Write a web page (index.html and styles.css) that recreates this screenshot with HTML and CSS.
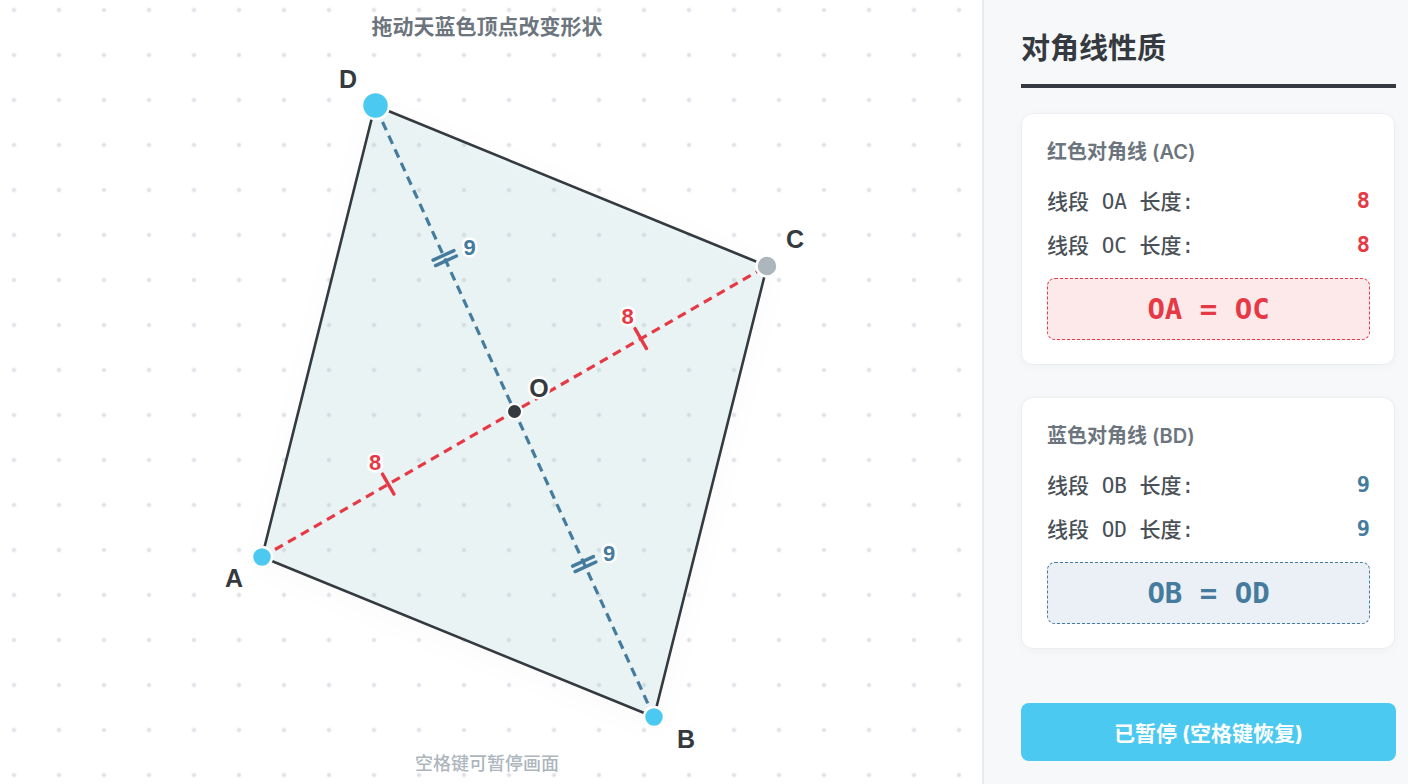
FILE: index.html
```html
<!DOCTYPE html>
<html lang="zh">
<head>
<meta charset="utf-8">
<title>对角线性质</title>
<link rel="stylesheet" href="styles.css">
</head>
<body>
<div class="app">
  <main class="stage">
    <div class="caption caption-top">拖动天蓝色顶点改变形状</div>
    <svg class="board" width="982" height="784" viewBox="0 0 982 784" xmlns="http://www.w3.org/2000/svg">
      <polygon class="quad" points="262,557 654,717 767,266 375,105.5"/>
      <line class="diag diag-ac" x1="262" y1="557" x2="767" y2="266"/>
      <line class="diag diag-bd" x1="654" y1="717" x2="375" y2="105.5"/>
      <line class="tick tick-red" x1="382.51" y1="474.14" x2="393.99" y2="494.07"/>
      <line class="tick tick-red" x1="635.01" y1="328.64" x2="646.49" y2="348.57"/>
      <line class="tick tick-blue" x1="433.05" y1="260.14" x2="453.97" y2="250.60"/>
      <line class="tick tick-blue" x1="435.53" y1="265.60" x2="456.45" y2="256.06"/>
      <line class="tick tick-blue" x1="572.55" y1="566.14" x2="593.47" y2="556.60"/>
      <line class="tick tick-blue" x1="575.03" y1="571.60" x2="595.95" y2="562.06"/>
      <text class="len len-red" x="375" y="462">8</text>
      <text class="len len-red" x="627.5" y="316">8</text>
      <text class="len len-blue" x="469.5" y="247">9</text>
      <text class="len len-blue" x="609" y="553">9</text>
      <circle class="vtx vtx-drag" cx="262" cy="557" r="10"/>
      <circle class="vtx vtx-drag" cx="654" cy="717" r="10"/>
      <circle class="vtx vtx-fixed" cx="767" cy="266" r="10.5"/>
      <circle class="vtx vtx-drag" cx="375.5" cy="105.5" r="13.5"/>
      <circle class="vtx vtx-center" cx="514.5" cy="411.5" r="7.5"/>
      <text class="vlabel" x="348" y="79">D</text>
      <text class="vlabel" x="795" y="239">C</text>
      <text class="vlabel" x="234" y="578">A</text>
      <text class="vlabel" x="686" y="739">B</text>
      <text class="vlabel" x="539" y="388">O</text>
    </svg>
    <div class="caption caption-bottom">空格键可暂停画面</div>
  </main>
  <aside class="panel">
    <h2 class="panel-title">对角线性质</h2>
    <section class="card card-red">
      <div class="card-title">红色对角线 (AC)</div>
      <div class="row"><span class="row-label">线段 OA 长度:</span><span class="row-value">8</span></div>
      <div class="row"><span class="row-label">线段 OC 长度:</span><span class="row-value">8</span></div>
      <div class="equation">OA = OC</div>
    </section>
    <section class="card card-blue">
      <div class="card-title">蓝色对角线 (BD)</div>
      <div class="row"><span class="row-label">线段 OB 长度:</span><span class="row-value">9</span></div>
      <div class="row"><span class="row-label">线段 OD 长度:</span><span class="row-value">9</span></div>
      <div class="equation">OB = OD</div>
    </section>
    <button class="pause-btn" type="button">已暂停 (空格键恢复)</button>
  </aside>
</div>
</body>
</html>
```

FILE: styles.css
```css
* { box-sizing: border-box; }
html, body {
  margin: 0;
  padding: 0;
  width: 1408px;
  height: 784px;
  overflow: hidden;
  background: #ffffff;
  font-family: "Noto Sans CJK SC", "Noto Sans", sans-serif;
}
.app {
  display: flex;
  width: 1408px;
  height: 784px;
}
.stage {
  position: relative;
  flex: 1;
  height: 784px;
  background-color: #ffffff;
  background-image: radial-gradient(circle at center, #dfe2e8 0, #dfe2e8 1.9px, rgba(223,226,232,0) 2.4px);
  background-size: 45px 45px;
  background-position: -8.5px -12.5px;
  overflow: hidden;
}
.board {
  display: block;
}
.caption {
  position: absolute;
  left: 0;
  right: 8px;
  text-align: center;
  white-space: nowrap;
}
.caption-top {
  top: 10px;
  font-size: 21px;
  line-height: 30px;
  font-weight: 700;
  color: #6c757d;
}
.caption-bottom {
  top: 748px;
  font-size: 18px;
  line-height: 28px;
  font-weight: 500;
  color: #adb5bd;
}
.quad {
  fill: rgba(172, 214, 216, 0.24);
  stroke: #343a40;
  stroke-width: 2.6;
  stroke-linejoin: round;
  filter: drop-shadow(0 6px 12px rgba(0, 0, 0, 0.05));
}
.diag {
  stroke-width: 3.2;
  stroke-dasharray: 9 6;
}
.diag-ac { stroke: #e63946; }
.diag-bd { stroke: #457b9d; }
.tick {
  stroke-width: 3.4;
  stroke-linecap: round;
}
.tick-red { stroke: #e63946; }
.tick-blue { stroke: #457b9d; }
.len {
  font-family: "Liberation Sans", Arial, sans-serif;
  font-size: 22px;
  font-weight: 700;
  text-anchor: middle;
  dominant-baseline: central;
  paint-order: stroke;
  stroke: #ffffff;
  stroke-width: 5px;
  stroke-linejoin: round;
}
.len-red { fill: #e63946; }
.len-blue { fill: #457b9d; }
.vtx {
  stroke: #ffffff;
  stroke-width: 2.5;
}
.vtx-drag { fill: #4cc9f0; }
.vtx-fixed { fill: #adb5bd; }
.vtx-center { fill: #343a40; stroke-width: 2; }
.vlabel {
  font-family: "Liberation Sans", Arial, sans-serif;
  font-size: 25px;
  font-weight: 700;
  fill: #343a40;
  text-anchor: middle;
  dominant-baseline: central;
  paint-order: stroke;
  stroke: #ffffff;
  stroke-width: 5px;
  stroke-linejoin: round;
}
.panel {
  width: 426px;
  height: 784px;
  flex-shrink: 0;
  background: #f7f8fa;
  border-left: 2px solid #e8eaee;
  padding: 26px 12px 23px 37px;
  display: flex;
  flex-direction: column;
}
.panel-title {
  margin: 0;
  font-size: 29px;
  line-height: 40px;
  font-weight: 700;
  color: #343a40;
  padding-bottom: 18px;
  border-bottom: 4px solid #343a40;
}
.card {
  width: 374px;
  background: #ffffff;
  border: 1px solid #eceef1;
  border-radius: 12px;
  box-shadow: 0 2px 8px rgba(0, 0, 0, 0.03);
  padding: 24px 24px 24px 25px;
}
.card-red { margin-top: 25px; }
.card-blue { margin-top: 32px; }
.card-title {
  font-family: "Inter", "Noto Sans CJK SC", sans-serif;
  font-size: 20px;
  line-height: 28px;
  font-weight: 600;
  color: #6c757d;
  margin-bottom: 12px;
}
.row {
  display: flex;
  justify-content: space-between;
  align-items: center;
  height: 44px;
  font-family: "DejaVu Sans Mono", "Noto Sans CJK SC", monospace;
  font-size: 21px;
  font-weight: 500;
  color: #495057;
}
.row-label {
  white-space: pre;
}
.row-value {
  font-weight: 700;
  font-size: 22px;
}
.card-red .row-value { color: #e63946; }
.card-blue .row-value { color: #457b9d; }
.equation {
  margin-top: 12px;
  height: 62px;
  border-radius: 8px;
  display: flex;
  align-items: center;
  justify-content: center;
  font-family: "DejaVu Sans Mono", "Liberation Mono", monospace;
  font-size: 29px;
  font-weight: 700;
  white-space: pre;
}
.card-red .equation {
  background: #fde8ea;
  border: 1px dashed #e63946;
  color: #e63946;
}
.card-blue .equation {
  background: #eaf0f5;
  border: 1px dashed #457b9d;
  color: #457b9d;
}
.pause-btn {
  margin-top: auto;
  width: 375px;
  height: 58px;
  border: none;
  border-radius: 8px;
  background: #4cc9f0;
  color: #ffffff;
  font-family: "Inter", "Noto Sans CJK SC", sans-serif;
  font-size: 21px;
  font-weight: 700;
  cursor: pointer;
}
```
